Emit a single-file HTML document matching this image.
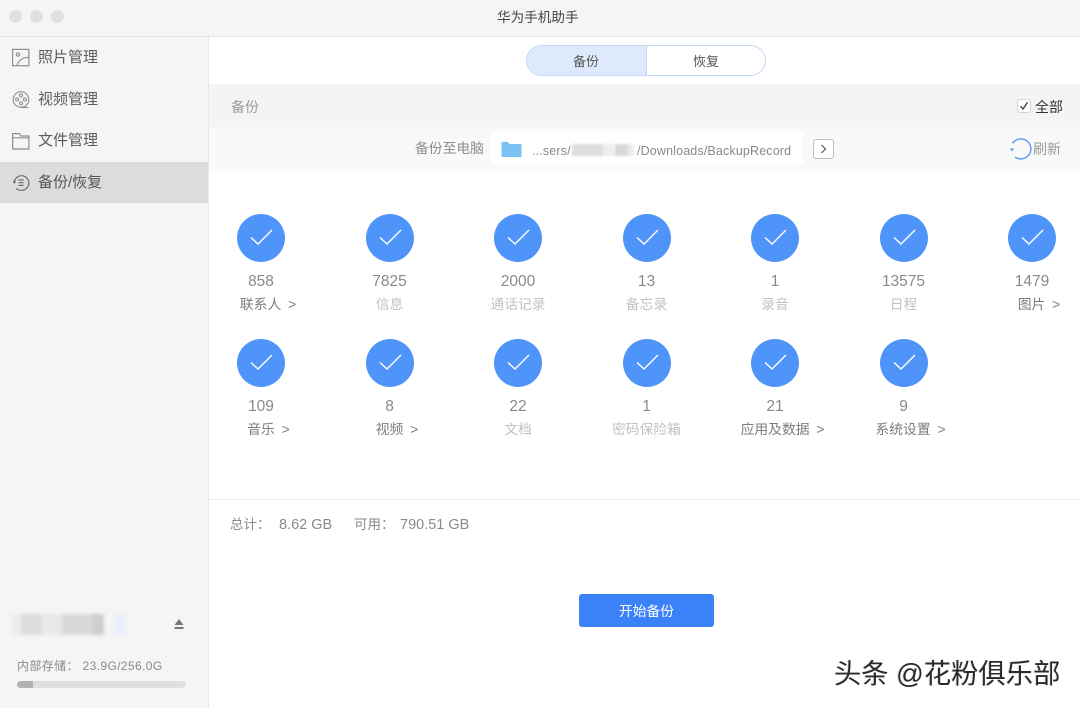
<!DOCTYPE html>
<html lang="zh"><head><meta charset="utf-8"><title>华为手机助手</title>
<style>
*{box-sizing:border-box;margin:0;padding:0}
html,body{width:1080px;height:708px;overflow:hidden;background:#fff}
body{position:relative;font-family:"Liberation Sans","Noto Sans CJK SC",sans-serif;color:#666}
.a{position:absolute;white-space:nowrap}
.nav{left:38px;font-size:15px;line-height:20px;color:#5c5c5c}
.c{position:absolute;width:48px;height:48px;border-radius:50%;background:#4f94f8}
.c svg{position:absolute;left:0;top:0}
.n,.l{position:absolute;width:120px;text-align:center;white-space:nowrap}
.n{font-size:15.5px;line-height:20px;color:#8a8a8a}
.l{font-size:13.8px;line-height:18px;word-spacing:3px;color:#7d7d7d}
.l.d{color:#c2c2c2}
.blur{position:absolute}
</style></head><body>
<div class="a" style="left:0;top:0;width:1080px;height:37px;background:#f5f5f5;border-bottom:1.5px solid #e6e6e6"></div>
<div class="a" style="left:9px;top:10px;width:13px;height:13px;border-radius:50%;background:#e0e0e0"></div>
<div class="a" style="left:30px;top:10px;width:13px;height:13px;border-radius:50%;background:#e0e0e0"></div>
<div class="a" style="left:51px;top:10px;width:13px;height:13px;border-radius:50%;background:#e0e0e0"></div>
<div class="a" style="left:497px;top:9px;font-size:13.6px;line-height:18px;color:#444">华为手机助手</div>

<div class="a" style="left:0;top:37px;width:209px;height:671px;background:#f5f5f5;border-right:1px solid #e8e8e8"></div>
<div class="a" style="left:0;top:162px;width:208px;height:41px;background:#dcdcdc"></div>
<svg class="a" style="left:11px;top:48px" width="20" height="20" viewBox="0 0 20 20" fill="none" stroke="#8f8f8f" stroke-width="1.2"><rect x="1.6" y="1.4" width="16.3" height="16.3"/><circle cx="7" cy="6.6" r="1.6"/><path d="M6 17.5C7.5 12.5 12 9 17.5 9.5"/></svg>
<svg class="a" style="left:11px;top:90px" width="20" height="20" viewBox="0 0 20 20" fill="none" stroke="#8f8f8f" stroke-width="1.1"><circle cx="10" cy="9.5" r="7.8"/><circle cx="10" cy="5.6" r="1.5"/><circle cx="10" cy="13.4" r="1.5"/><circle cx="6.1" cy="9.5" r="1.5"/><circle cx="13.9" cy="9.5" r="1.5"/><path d="M10 17.5h7.5"/></svg>
<svg class="a" style="left:11px;top:131px" width="20" height="20" viewBox="0 0 20 20" fill="none" stroke="#8f8f8f" stroke-width="1.2"><path d="M1.6 2.6h6.6l1.6 2.4h8.1v13H1.6zM1.6 6.8h16.3"/></svg>
<svg class="a" style="left:11px;top:173px" width="20" height="20" viewBox="0 0 20 20" fill="none" stroke="#6c6c6c" stroke-width="1.2"><path d="M3.4 8.5A7.3 7.3 0 1 1 10 17.3C8 17.3 6.5 16.5 5 15.5"/><path d="M1.6 8.3h3.6L3.4 11z" fill="#6c6c6c" stroke="none"/><path d="M7.6 7h5M7.6 9.7h5M7.6 12.4h5"/></svg>
<div class="a nav" style="top:48px">照片管理</div>
<div class="a nav" style="top:90px">视频管理</div>
<div class="a nav" style="top:131px">文件管理</div>
<div class="a nav" style="top:173px;color:#555">备份/恢复</div>

<div class="blur" style="left:11px;top:614px;width:93px;height:21px;background:linear-gradient(90deg,#ececec 0 11%,#dcdcdc 11% 33%,#e8e8e8 33% 55%,#d8d8d8 55% 88%,#cecece 88%);filter:blur(1.5px)"></div>
<div class="blur" style="left:114px;top:614px;width:11px;height:21px;background:#e8eefa;filter:blur(1.5px)"></div>
<svg class="a" style="left:174px;top:619px" width="10" height="11" viewBox="0 0 10 11"><path d="M5 0 9.5 6H.5z" fill="#777"/><rect x=".5" y="8" width="9" height="2" fill="#777"/></svg>
<div class="a" style="left:17px;top:657px;font-size:12px;line-height:18px;color:#8a8a8a;letter-spacing:.38px">内部存储：&nbsp;23.9G/256.0G</div>
<div class="a" style="left:17px;top:681px;width:169px;height:7px;border-radius:4px;background:#e0e0e0;overflow:hidden"><div style="width:16px;height:7px;background:#b2b2b2"></div></div>

<div class="a" style="left:526px;top:45px;width:240px;height:31px;border:1px solid #c3d8f8;border-radius:16px;background:#fff;overflow:hidden"><div style="width:120px;height:29px;background:#deeafb;border-right:1px solid #c3d8f8"></div></div>
<div class="a" style="left:573px;top:53px;font-size:13px;line-height:18px;color:#555">备份</div>
<div class="a" style="left:693px;top:53px;font-size:13px;line-height:18px;color:#555">恢复</div>

<div class="a" style="left:209px;top:84px;width:871px;height:43px;background:#f4f4f4"></div>
<div class="a" style="left:209px;top:127px;width:871px;height:44px;background:#f9f9f9"></div>
<div class="a" style="left:231px;top:97px;font-size:14px;line-height:20px;color:#9a9a9a">备份</div>
<div class="a" style="left:1017px;top:99px;width:14px;height:14px;border:1px solid #d4d4d4;border-radius:3px;background:#fff"></div>
<svg class="a" style="left:1017px;top:99px" width="14" height="14" viewBox="0 0 14 14" fill="none" stroke="#444" stroke-width="1.4"><path d="M3.5 7.2 6 10 10.5 3.2"/></svg>
<div class="a" style="left:1035px;top:98px;font-size:14px;line-height:18px;color:#333">全部</div>
<div class="a" style="left:415px;top:140px;font-size:13.8px;line-height:18px;color:#8d8d8d">备份至电脑</div>
<div class="a" style="left:491px;top:132px;width:312px;height:33px;background:#fff"></div>
<svg class="a" style="left:501px;top:140px" width="21" height="18" viewBox="0 0 21 18"><path d="M0.5 2.5Q.5 2 1 2h6l1.5 2H20q.5 0 .5.5v12q0 .5-.5.5H1q-.5 0-.5-.5z" fill="#7cc1f4"/></svg>
<div class="a" style="left:532px;top:142px;font-size:12.5px;line-height:18px;color:#8a8a8a;letter-spacing:.15px">...sers/</div>
<div class="blur" style="left:572px;top:144px;width:62px;height:12px;background:linear-gradient(90deg,#dedede 0 50%,#efefef 50% 70%,#d8d8d8 70% 90%,#ececec 90%);filter:blur(1px)"></div>
<div class="a" style="left:637px;top:142px;font-size:12.5px;line-height:18px;color:#8a8a8a;letter-spacing:.15px">/Downloads/BackupRecord</div>
<div class="a" style="left:813px;top:139px;width:21px;height:20px;border:1px solid #bdbdbd;border-radius:3px;background:#fff"></div>
<svg class="a" style="left:813px;top:139px" width="21" height="20" viewBox="0 0 21 20" fill="none" stroke="#555" stroke-width="1.2"><path d="M8.5 6 12.5 10 8.5 14"/></svg>
<svg class="a" style="left:1009px;top:137px" width="23" height="23" viewBox="0 0 23 23" fill="none" stroke="#4f94f8" stroke-width="1.3"><path d="M3.5 6.5A10 10 0 1 1 6 20"/><path d="M1 11.5h4L3.2 14.5z" fill="#4f94f8" stroke="none"/></svg>
<div class="a" style="left:1033px;top:140px;font-size:14px;line-height:18px;color:#999">刷新</div>

<!-- Row 1 -->
<div class="c" style="left:237px;top:214px"><svg width="48" height="48" fill="none" stroke="#fff" stroke-width="1.4"><path d="M14 23.5 21 30 35 16"/></svg></div>
<div class="c" style="left:366px;top:214px"><svg width="48" height="48" fill="none" stroke="#fff" stroke-width="1.4"><path d="M14 23.5 21 30 35 16"/></svg></div>
<div class="c" style="left:494px;top:214px"><svg width="48" height="48" fill="none" stroke="#fff" stroke-width="1.4"><path d="M14 23.5 21 30 35 16"/></svg></div>
<div class="c" style="left:623px;top:214px"><svg width="48" height="48" fill="none" stroke="#fff" stroke-width="1.4"><path d="M14 23.5 21 30 35 16"/></svg></div>
<div class="c" style="left:751px;top:214px"><svg width="48" height="48" fill="none" stroke="#fff" stroke-width="1.4"><path d="M14 23.5 21 30 35 16"/></svg></div>
<div class="c" style="left:880px;top:214px"><svg width="48" height="48" fill="none" stroke="#fff" stroke-width="1.4"><path d="M14 23.5 21 30 35 16"/></svg></div>
<div class="c" style="left:1008px;top:214px"><svg width="48" height="48" fill="none" stroke="#fff" stroke-width="1.4"><path d="M14 23.5 21 30 35 16"/></svg></div>
<div class="n" style="left:201px;top:272px">858</div><div class="l" style="left:208px;top:296px">联系人 &gt;</div>
<div class="n" style="left:329.5px;top:272px">7825</div><div class="l d" style="left:329.5px;top:296px">信息</div>
<div class="n" style="left:458px;top:272px">2000</div><div class="l d" style="left:458px;top:296px">通话记录</div>
<div class="n" style="left:586.5px;top:272px">13</div><div class="l d" style="left:586.5px;top:296px">备忘录</div>
<div class="n" style="left:715px;top:272px">1</div><div class="l d" style="left:715px;top:296px">录音</div>
<div class="n" style="left:843.5px;top:272px">13575</div><div class="l d" style="left:843.5px;top:296px">日程</div>
<div class="n" style="left:972px;top:272px">1479</div><div class="l" style="left:979px;top:296px">图片 &gt;</div>
<!-- Row 2 -->
<div class="c" style="left:237px;top:339px"><svg width="48" height="48" fill="none" stroke="#fff" stroke-width="1.4"><path d="M14 23.5 21 30 35 16"/></svg></div>
<div class="c" style="left:366px;top:339px"><svg width="48" height="48" fill="none" stroke="#fff" stroke-width="1.4"><path d="M14 23.5 21 30 35 16"/></svg></div>
<div class="c" style="left:494px;top:339px"><svg width="48" height="48" fill="none" stroke="#fff" stroke-width="1.4"><path d="M14 23.5 21 30 35 16"/></svg></div>
<div class="c" style="left:623px;top:339px"><svg width="48" height="48" fill="none" stroke="#fff" stroke-width="1.4"><path d="M14 23.5 21 30 35 16"/></svg></div>
<div class="c" style="left:751px;top:339px"><svg width="48" height="48" fill="none" stroke="#fff" stroke-width="1.4"><path d="M14 23.5 21 30 35 16"/></svg></div>
<div class="c" style="left:880px;top:339px"><svg width="48" height="48" fill="none" stroke="#fff" stroke-width="1.4"><path d="M14 23.5 21 30 35 16"/></svg></div>
<div class="n" style="left:201px;top:397px">109</div><div class="l" style="left:208.5px;top:421px">音乐 &gt;</div>
<div class="n" style="left:329.5px;top:397px">8</div><div class="l" style="left:337px;top:421px">视频 &gt;</div>
<div class="n" style="left:458px;top:397px">22</div><div class="l d" style="left:458px;top:421px">文档</div>
<div class="n" style="left:586.5px;top:397px">1</div><div class="l d" style="left:586.5px;top:421px">密码保险箱</div>
<div class="n" style="left:715px;top:397px">21</div><div class="l" style="left:722.5px;top:421px">应用及数据 &gt;</div>
<div class="n" style="left:843.5px;top:397px">9</div><div class="l" style="left:850.5px;top:421px">系统设置 &gt;</div>

<div class="a" style="left:209px;top:499px;width:871px;height:1px;background:#f0f0f0"></div>
<div class="a" style="left:230px;top:516px;font-size:13.5px;line-height:18px;color:#8a8a8a">总计：</div>
<div class="a" style="left:279px;top:515px;font-size:14.5px;line-height:20px;color:#8a8a8a">8.62 GB</div>
<div class="a" style="left:354px;top:516px;font-size:13.5px;line-height:18px;color:#8a8a8a">可用：</div>
<div class="a" style="left:400px;top:515px;font-size:14.5px;line-height:20px;color:#8a8a8a">790.51 GB</div>

<div class="a" style="left:579px;top:594px;width:135px;height:33px;background:#3b82f9;border-radius:3px;color:#fff;font-size:13.8px;line-height:35px;text-align:center">开始备份</div>

<div class="a" style="left:834px;top:658px;font-size:27.3px;line-height:32px;color:#2a2a2a;text-shadow:1px 1px 0 #fff,-1px 0 0 #ddd">头条 @花粉俱乐部</div>
</body></html>
